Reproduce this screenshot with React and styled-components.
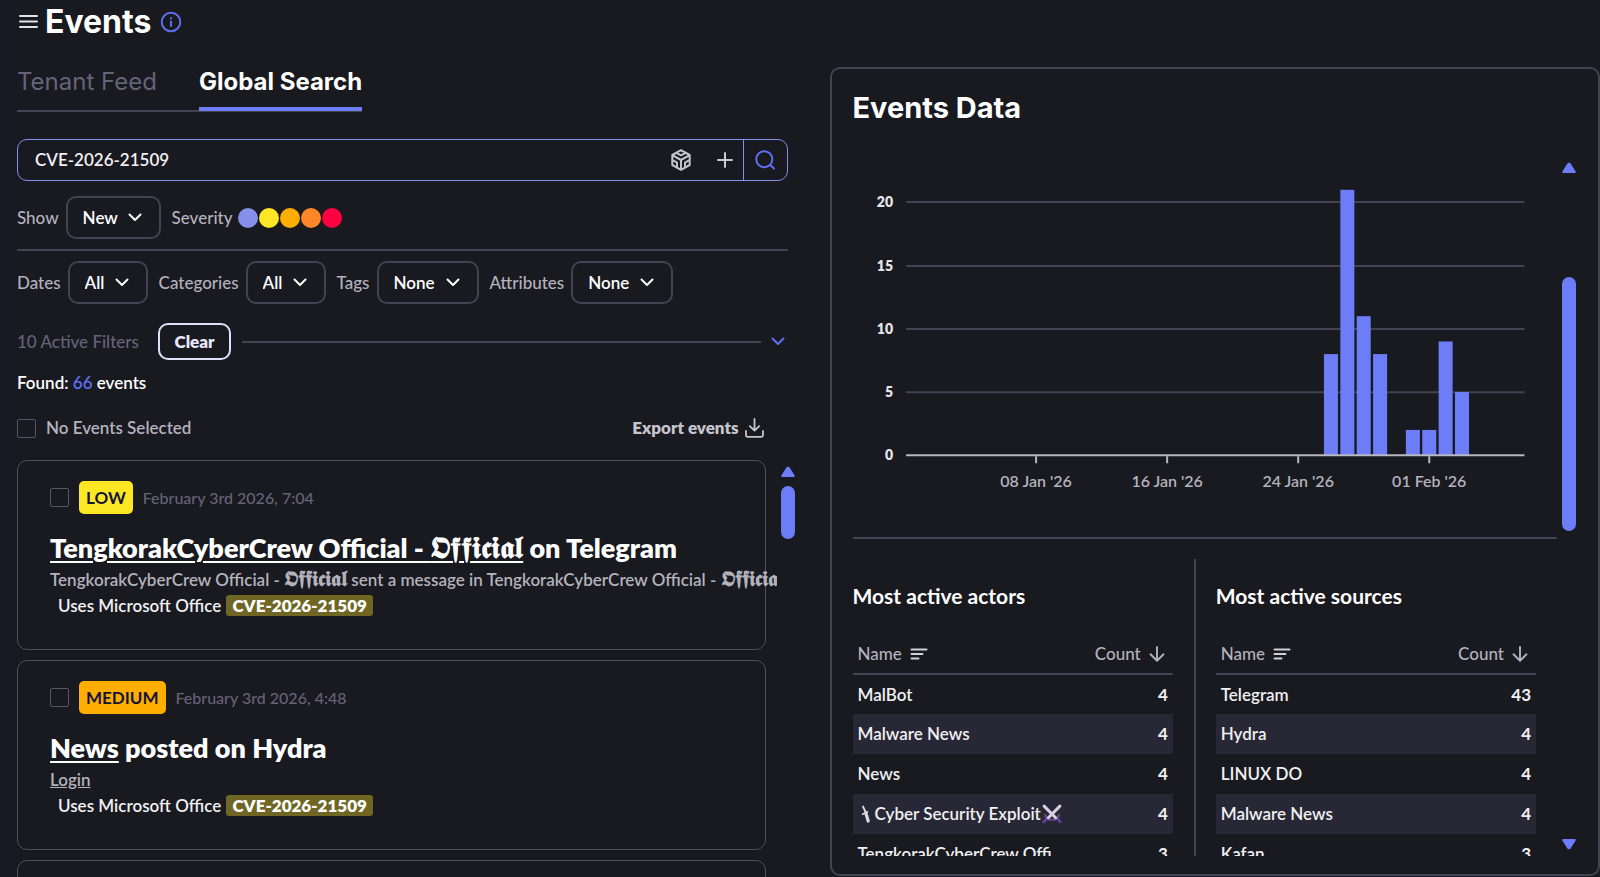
import React from "react";
import styled, { createGlobalStyle } from "styled-components";

const c = {
  bg: "#191920",
  line: "#434152",
  cardLine: "#504e63",
  text: "#f0f0f3",
  white: "#ffffff",
  label: "#b3b2bd",
  muted: "#656378",
  accent: "#6c7df7",
  accentSoft: "#8391ea",
  link: "#5f6ff0",
  stripe: "#282735",
};

const ui = `Lato, "Liberation Sans", sans-serif`;
const display = `Inter, "Liberation Sans", sans-serif`;

const GlobalStyle = createGlobalStyle`
  *, *::before, *::after { box-sizing: border-box; }
  body {
    margin: 0;
    background: linear-gradient(90deg, #171926 0, ${c.bg} 24px);
    color: ${c.text};
    font-family: ${ui};
    font-size: 17px;
    line-height: 24px;
    font-weight: 500;
  }
  h1, h2, h3, p { margin: 0; }
  button, input, select { font: inherit; color: inherit; }
  button { background: none; border: 0; padding: 0; cursor: pointer; }
  a { color: inherit; }
  svg { display: block; flex: none; }
`;

const Page = styled.div`
  display: flex;
  flex-direction: column;
  height: 100vh;
  overflow: hidden;
`;

const Header = styled.header`
  display: flex;
  align-items: center;
  gap: 6px;
  height: 44px;
  margin-bottom: 23px;
  padding-left: 19px;
`;

const IconButton = styled.button`
  display: flex;
  align-items: center;
  justify-content: center;
  color: ${(p) => p.$color || c.label};
`;

const PageTitle = styled.h1`
  font: 700 32px/44px ${display};
  color: ${c.white};
  margin-right: 3px;
`;

const Columns = styled.main`
  flex: 1;
  min-height: 0;
  display: grid;
  grid-template-columns: minmax(0, 1fr) minmax(0, 1fr);
  gap: 42px;
  padding-left: 17px;
`;

const Feed = styled.section`
  display: flex;
  flex-direction: column;
  min-height: 0;
`;

const Tabs = styled.nav`
  display: flex;
  align-self: flex-start;
  gap: 42px;
  height: 45px;
  border-bottom: 2px solid ${c.line};
`;

const Tab = styled.button`
  height: 44px;
  padding-bottom: 10px;
  border-bottom: 4px solid ${(p) => (p.$active ? c.accent : "transparent")};
  font: ${(p) => (p.$active ? 700 : 400)} 24px/30px ${display};
  color: ${(p) => (p.$active ? c.white : c.muted)};
`;

const SearchBox = styled.form`
  display: flex;
  align-items: stretch;
  height: 42px;
  margin-top: 27px;
  border: 1px solid ${c.accentSoft};
  border-radius: 10px;
`;

const SearchInput = styled.input`
  flex: 1;
  min-width: 0;
  padding: 0 17px;
  border: 0;
  outline: 0;
  background: none;
  font-weight: 600;
`;

const SearchTools = styled.div`
  display: flex;
  align-items: center;
  gap: 26px;
  padding-right: 10px;
`;

const SearchSubmit = styled(IconButton)`
  width: 44px;
  border-left: 1px solid ${c.accentSoft};
`;

const FilterRow = styled.div`
  display: flex;
  align-items: center;
  gap: 11px;
  height: 43px;
  margin-top: ${(p) => p.$top}px;
`;

const Field = styled.label`
  display: flex;
  align-items: center;
  gap: 7px;
  color: ${c.label};
`;

const SelectWrap = styled.span`
  position: relative;
  display: flex;
`;

const Select = styled.select`
  appearance: none;
  width: ${(p) => p.$width}px;
  height: 43px;
  padding: 0 15px;
  border: 2px solid ${c.line};
  border-radius: 10px;
  background: none;
  font-weight: 600;
  color: ${c.white};
`;

const SelectArrow = styled.svg`
  position: absolute;
  right: 19px;
  top: 17px;
  pointer-events: none;
`;

const Severities = styled.div`
  display: flex;
  align-items: center;
  gap: 5px;
  color: ${c.label};
`;

const Dots = styled.div`
  display: flex;
  gap: 1px;
`;

const Dot = styled.button`
  width: 20px;
  height: 20px;
  border-radius: 50%;
  background: ${(p) => p.$color};
`;

const Divider = styled.hr`
  flex: none;
  width: 100%;
  height: 2px;
  margin: ${(p) => p.$top || 0}px 0 0;
  border: 0;
  background: ${c.line};
`;

const ActiveFilters = styled.div`
  display: flex;
  align-items: center;
  margin-top: 19px;
  padding-right: 3px;
  color: ${c.muted};
`;

const FilterCount = styled.span`
  width: 141px;
`;

const ClearButton = styled.button`
  width: 73px;
  height: 37px;
  flex: none;
  margin-right: 11px;
  border: 2px solid #e0e0fb;
  border-radius: 10px;
  font-weight: 800;
  color: #e6e6fb;
`;

const FilterLine = styled.hr`
  flex: 1;
  height: 2px;
  margin: 0 10px 0 0;
  border: 0;
  background: ${c.line};
`;

const Found = styled.p`
  margin-top: 11px;
  font-weight: 600;
  color: ${c.white};
`;

const FoundCount = styled.span`
  color: ${c.link};
`;

const SelectionBar = styled.div`
  display: flex;
  align-items: center;
  justify-content: space-between;
  margin: 21px 24px 20px 0;
  color: ${c.label};
`;

const CheckLabel = styled.label`
  display: flex;
  align-items: center;
  gap: 10px;
  font-weight: 600;
`;

const Checkbox = styled.input`
  appearance: none;
  width: 19px;
  height: 19px;
  margin: 0;
  border: 1px solid #56546a;
  border-radius: 2px;
`;

const ExportButton = styled.button`
  display: flex;
  align-items: center;
  gap: 6px;
  font-weight: 800;
  color: #c6c5ce;
`;

const ListArea = styled.div`
  flex: 1;
  min-height: 0;
  display: flex;
  gap: 4px;
  margin-right: -7px;
`;

const List = styled.div`
  flex: 1;
  min-width: 0;
  overflow: hidden;
  display: flex;
  flex-direction: column;
  gap: 10px;
  padding-right: 11px;
`;

const Card = styled.article`
  flex: none;
  height: 190px;
  padding: 20px 32px;
  border: 1px solid ${c.cardLine};
  border-radius: 10px;
`;

const CardMeta = styled.div`
  display: flex;
  align-items: center;
  gap: 10px;
  margin-bottom: 18px;
  font-size: 16px;
  color: ${c.muted};
`;

const Badge = styled.span`
  height: 33px;
  padding: 0 7px;
  border-radius: 5px;
  background: ${(p) => p.$color};
  font-size: 17px;
  line-height: 33px;
  font-weight: 700;
  color: #14143a;
`;

const CardTitle = styled.h2`
  margin-bottom: 3px;
  font-size: 27px;
  line-height: 32px;
  font-weight: 800;
  color: ${c.white};
  white-space: nowrap;

  a {
    text-decoration-thickness: 2px;
    text-underline-offset: 3px;
  }
`;

const CardText = styled.p`
  line-height: 26px;
  font-weight: 600;
  color: ${c.label};
  white-space: nowrap;
`;

const Blackletter = styled.span`
  font-size: ${(p) => p.$size}px;
  line-height: 0;
  font-weight: 700;
`;

const Usage = styled.p`
  padding-left: 8px;
  line-height: 26px;
  font-weight: 600;
  color: ${c.text};
`;

const Mark = styled.mark`
  margin-left: 1px;
  padding: 0 6px;
  border-radius: 3px;
  background: #6f6624;
  color: ${c.white};
  font-weight: 800;
`;

const Bar = styled.div`
  display: flex;
  flex-direction: column;
  width: 14px;
  padding: ${(p) => p.$pad};
`;

const Gap = styled.div`
  flex: ${(p) => p.$grow} 0 0;
`;

const Thumb = styled.div`
  flex: ${(p) => p.$grow} 0 0;
  border-radius: 7px;
  background: ${c.accent};
`;

const Panel = styled.section`
  display: flex;
  flex-direction: column;
  min-height: 0;
  margin-bottom: 1px;
  padding: 22px 22px 18px 21px;
  border: 2px solid ${c.line};
  border-radius: 10px;
`;

const PanelTitle = styled.h2`
  margin-bottom: 25px;
  font: 700 29px/34px ${display};
  color: ${c.white};
`;

const PanelBody = styled.div`
  flex: 1;
  min-height: 0;
  display: flex;
  gap: 5px;
`;

const PanelScroll = styled.div`
  flex: 1;
  min-width: 0;
  overflow: hidden;
`;

const ChartSvg = styled.svg`
  width: 100%;
  height: auto;
`;

const AxisText = styled.text`
  font: ${(p) => (p.$strong ? 800 : 600)} ${(p) => (p.$strong ? 14 : 16)}px ${ui};
  fill: ${(p) => (p.$strong ? "#e4e4e8" : c.label)};
  text-anchor: ${(p) => (p.$strong ? "end" : "middle")};
`;

const Tables = styled.div`
  display: grid;
  grid-template-columns: minmax(0, 1fr) minmax(0, 1fr);
  gap: 43px;
  margin-top: 20px;
  padding-right: 21px;
`;

const Ranking = styled.section`
  position: relative;
  padding-top: 23px;
  height: 360px;

  & + &::before {
    content: "";
    position: absolute;
    left: -22px;
    top: 0;
    bottom: 0;
    width: 2px;
    background: ${c.line};
  }
`;

const RankingTitle = styled.h3`
  margin-bottom: 24px;
  font-size: 21px;
  line-height: 28px;
  font-weight: 700;
  color: ${c.white};
`;

const Table = styled.table`
  width: 100%;
  border-collapse: collapse;
  text-align: left;

  th {
    height: 40px;
    padding: 0 5px;
    border-bottom: 2px solid ${c.line};
    font-weight: 500;
    color: ${c.label};
  }
  td {
    height: 40px;
    padding: 0 5px;
    font-weight: 600;
  }
  td:last-child {
    text-align: right;
    font-weight: 700;
  }
  tbody tr:nth-child(even) { background: ${c.stripe}; }
`;

const Sort = styled.button`
  display: flex;
  align-items: center;
  gap: 8px;
  margin-left: ${(p) => (p.$end ? "auto" : 0)};
  margin-right: ${(p) => (p.$end ? "3px" : 0)};
`;

const Cell = styled.span`
  display: flex;
  align-items: center;
`;

const stroke = { fill: "none", stroke: "currentColor", strokeLinecap: "round", strokeLinejoin: "round" };

const MenuIcon = () => (
  <svg width="20" height="16" viewBox="0 0 20 16" {...stroke} stroke="#e2e2e6" strokeWidth="2">
    <path d="M1 2h17M1 7.500h17M1 13h17" />
  </svg>
);
const InfoIcon = () => (
  <svg width="22" height="22" viewBox="0 0 22 22" {...stroke} strokeWidth="2">
    <circle cx="11" cy="11" r="9.300" />
    <path d="M11 10.500v4.500M11 7v.4" />
  </svg>
);
const CubeIcon = () => (
  <svg width="20" height="22" viewBox="0 0 20 22" {...stroke} stroke="#c4c4cb" strokeWidth="2">
    <path d="M10 1.200 18.700 6v10L10 20.800 1.300 16V6zM1.300 6.200 10 11l8.700-4.800M10 11v9.500M5.400 3.800 10 6.300l4.600-2.500M1.600 11l4.400 2.600v4.700M18.400 11 14 13.600v4.700" />
  </svg>
);
const PlusIcon = () => (
  <svg width="16" height="16" viewBox="0 0 16 16" {...stroke} stroke="#c9c9cf" strokeWidth="2">
    <path d="M8 1v14M1 8h14" />
  </svg>
);
const SearchIcon = () => (
  <svg width="20" height="20" viewBox="0 0 20 20" {...stroke} strokeWidth="2">
    <circle cx="9.300" cy="9.200" r="8" />
    <path d="M15.200 15 19 18.600" />
  </svg>
);
const ChevronIcon = () => (
  <svg width="14" height="9" viewBox="0 0 14 9" {...stroke} strokeWidth="2">
    <path d="M1.500 1.500 7 7l5.500-5.500" />
  </svg>
);
const DownloadIcon = () => (
  <svg width="19" height="20" viewBox="0 0 19 20" {...stroke} strokeWidth="1.800">
    <path d="M9.500 1v11.500M4.800 8.200l4.700 4.500 4.700-4.500M1 13v4q0 1.800 1.800 1.800h13.400q1.800 0 1.800-1.800v-4" />
  </svg>
);
const SortIcon = () => (
  <svg width="18" height="12" viewBox="0 0 18 12" {...stroke} stroke="#d0d0d6" strokeWidth="2">
    <path d="M1.500 1.500h15M1.500 6h11M1.500 10.500h7" />
  </svg>
);
const ArrowDownIcon = () => (
  <svg width="16" height="16" viewBox="0 0 16 16" {...stroke} strokeWidth="1.900">
    <path d="M8 1v13.500M1.500 8.300 8 14.700l6.500-6.400" />
  </svg>
);
const DaggerIcon = () => (
  <svg width="17" height="18" viewBox="0 0 17 18" fill="none" stroke="#dcdce0" strokeLinecap="round">
    <path d="M5 1.500 8 8" strokeWidth="1.800" />
    <path d="m7.800 8 2.400 8" strokeWidth="3.200" />
    <path d="m4.500 9.200 5-2.400" strokeWidth="1.600" />
  </svg>
);
const SwordsIcon = () => (
  <svg width="22" height="20" viewBox="0 0 20 19" fill="none" strokeLinecap="round">
    <path d="M3.500 10.500q1 4.500 5.500 4.500M16.500 10.500q-1 4.500-5.500 4.500" stroke="#6b4a86" strokeWidth="2.200" />
    <path d="m5 14-2.800 3M15 14l2.800 3" stroke="#5b44a0" strokeWidth="2.600" />
    <path d="M2.500 2 13.500 13M17.500 2 6.500 13" stroke="#d9d0e4" strokeWidth="2.800" />
  </svg>
);
const Arrow = ({ down }) => (
  <svg width="14" height="11" viewBox="0 0 14 11" fill={c.accent} stroke={c.accent} strokeWidth="2" strokeLinejoin="round">
    <path d={down ? "M1.200 1h11.600L7.600 9.200h-1.200z" : "M1.200 10h11.600L7.600 1.800h-1.200z"} />
  </svg>
);

function SelectField({ label, value, width }) {
  return (
    <Field>
      {label}
      <SelectWrap>
        <Select $width={width} defaultValue={value}>
          <option>{value}</option>
        </Select>
        <SelectArrow width="14" height="9" viewBox="0 0 14 9" {...stroke} stroke="#ffffff" strokeWidth="2">
          <path d="M1.500 1.500 7 7l5.500-5.500" />
        </SelectArrow>
      </SelectWrap>
    </Field>
  );
}

function ScrollBar({ pad, before, thumb, after, end }) {
  return (
    <Bar $pad={pad} aria-hidden="true">
      <Arrow />
      <Gap $grow={before} />
      <Thumb $grow={thumb} />
      <Gap $grow={after} />
      {end && <Arrow down />}
    </Bar>
  );
}

const severities = [
  ["Info", "#8490ea"],
  ["Low", "#fde725"],
  ["Medium", "#ffae00"],
  ["High", "#ff8629"],
  ["Critical", "#ff0140"],
];

const fraktur = "𝕺𝖋𝖋𝖎𝖈𝖎𝖆𝖑";

function EventCard({ level, color, date, title, rest, children }) {
  return (
    <Card>
      <CardMeta>
        <Checkbox type="checkbox" aria-label="Select event" />
        <Badge $color={color}>{level}</Badge>
        <time>{date}</time>
      </CardMeta>
      <CardTitle>
        <a href="#event">{title}</a> {rest}
      </CardTitle>
      <CardText>{children}</CardText>
      <Usage>
        Uses Microsoft Office <Mark>CVE-2026-21509</Mark>
      </Usage>
    </Card>
  );
}

const bars = [
  [26, 8], [27, 21], [28, 11], [29, 8], [31, 2], [32, 2], [33, 9], [34, 5],
];
const ticks = [
  [8, "08 Jan '26"], [16, "16 Jan '26"], [24, "24 Jan '26"], [32, "01 Feb '26"],
];

function EventsChart() {
  const base = 305;
  const y = (v) => base - v * 12.63;
  const x = (day) => 52 + day * 16.37;
  return (
    <ChartSvg viewBox="0 0 704 387" role="img" aria-label="Events per day">
      {[5, 10, 15, 20].map((v) => (
        <path key={v} d={`M53 ${Math.round(y(v))}H671`} stroke={c.line} strokeWidth="2" />
      ))}
      {bars.map(([day, v]) => (
        <rect key={day} x={x(day) - 7} y={y(v)} width="14" height={base - y(v)} fill={c.accent} />
      ))}
      <path d={`M53 ${base}H671`} stroke="#b9b8c2" strokeWidth="2" />
      {[0, 5, 10, 15, 20].map((v) => (
        <AxisText key={v} $strong x="40" y={y(v) + 5}>{v}</AxisText>
      ))}
      {ticks.map(([day, label]) => (
        <g key={label}>
          <path d={`M${x(day)} ${base + 1}v7`} stroke="#b9b8c2" strokeWidth="2" />
          <AxisText x={x(day)} y={base + 32}>{label}</AxisText>
        </g>
      ))}
    </ChartSvg>
  );
}

function RankingTable({ title, rows }) {
  return (
    <Ranking>
      <RankingTitle>{title}</RankingTitle>
      <Table>
        <thead>
          <tr>
            <th><Sort>Name <SortIcon /></Sort></th>
            <th><Sort $end>Count <ArrowDownIcon /></Sort></th>
          </tr>
        </thead>
        <tbody>
          {rows.map(([name, count], i) => (
            <tr key={i}>
              <td><Cell>{name}</Cell></td>
              <td>{count}</td>
            </tr>
          ))}
        </tbody>
      </Table>
    </Ranking>
  );
}

const actors = [
  ["MalBot", 4],
  ["Malware News", 4],
  ["News", 4],
  [<><DaggerIcon />Cyber Security Exploit<SwordsIcon /></>, 4],
  ["TengkorakCyberCrew Offi", 3],
];
const sources = [
  ["Telegram", 43],
  ["Hydra", 4],
  ["LINUX DO", 4],
  ["Malware News", 4],
  ["Kafan", 3],
];

export default function App() {
  return (
    <>
      <GlobalStyle />
      <Page>
        <Header>
          <IconButton aria-label="Menu"><MenuIcon /></IconButton>
          <PageTitle>Events</PageTitle>
          <IconButton aria-label="About events" $color={c.link}><InfoIcon /></IconButton>
        </Header>
        <Columns>
          <Feed>
            <Tabs>
              <Tab>Tenant Feed</Tab>
              <Tab $active>Global Search</Tab>
            </Tabs>
            <SearchBox onSubmit={(e) => e.preventDefault()}>
              <SearchInput aria-label="Search events" defaultValue="CVE-2026-21509" />
              <SearchTools>
                <IconButton type="button" aria-label="Entities"><CubeIcon /></IconButton>
                <IconButton type="button" aria-label="Add condition"><PlusIcon /></IconButton>
              </SearchTools>
              <SearchSubmit type="submit" aria-label="Search" $color={c.link}><SearchIcon /></SearchSubmit>
            </SearchBox>
            <FilterRow $top={15}>
              <SelectField label="Show" value="New" width={95} />
              <Severities>
                Severity
                <Dots>
                  {severities.map(([name, color]) => (
                    <Dot key={name} type="button" aria-label={name} $color={color} />
                  ))}
                </Dots>
              </Severities>
            </FilterRow>
            <Divider $top={10} />
            <FilterRow $top={10}>
              <SelectField label="Dates" value="All" width={80} />
              <SelectField label="Categories" value="All" width={80} />
              <SelectField label="Tags" value="None" width={102} />
              <SelectField label="Attributes" value="None" width={102} />
            </FilterRow>
            <ActiveFilters>
              <FilterCount>10 Active Filters</FilterCount>
              <ClearButton>Clear</ClearButton>
              <FilterLine />
              <IconButton aria-label="Expand filters" $color={c.link}><ChevronIcon /></IconButton>
            </ActiveFilters>
            <Found>Found: <FoundCount>66</FoundCount> events</Found>
            <SelectionBar>
              <CheckLabel><Checkbox type="checkbox" />No Events Selected</CheckLabel>
              <ExportButton>Export events <DownloadIcon /></ExportButton>
            </SelectionBar>
            <ListArea>
              <List>
                <EventCard
                  level="LOW"
                  color="#fde725"
                  date="February 3rd 2026, 7:04"
                  title={<>TengkorakCyberCrew Official - <Blackletter $size={30}>{fraktur}</Blackletter></>}
                  rest="on Telegram"
                >
                  TengkorakCyberCrew Official - <Blackletter $size={21}>{fraktur}</Blackletter> sent a message in
                  TengkorakCyberCrew Official - <Blackletter $size={21}>{fraktur}</Blackletter>
                </EventCard>
                <EventCard
                  level="MEDIUM"
                  color="#ffae00"
                  date="February 3rd 2026, 4:48"
                  title="News"
                  rest="posted on Hydra"
                >
                  <a href="#login">Login</a>
                </EventCard>
                <Card />
              </List>
              <ScrollBar pad="6px 0 12px" before={9} thumb={53} after={326} />
            </ListArea>
          </Feed>
          <Panel>
            <PanelTitle>Events Data</PanelTitle>
            <PanelBody>
              <PanelScroll>
                <EventsChart />
                <Divider />
                <Tables>
                  <RankingTable title="Most active actors" rows={actors} />
                  <RankingTable title="Most active sources" rows={sources} />
                </Tables>
              </PanelScroll>
              <ScrollBar pad="12px 0 6px" before={104} thumb={254} after={308} end />
            </PanelBody>
          </Panel>
        </Columns>
      </Page>
    </>
  );
}
